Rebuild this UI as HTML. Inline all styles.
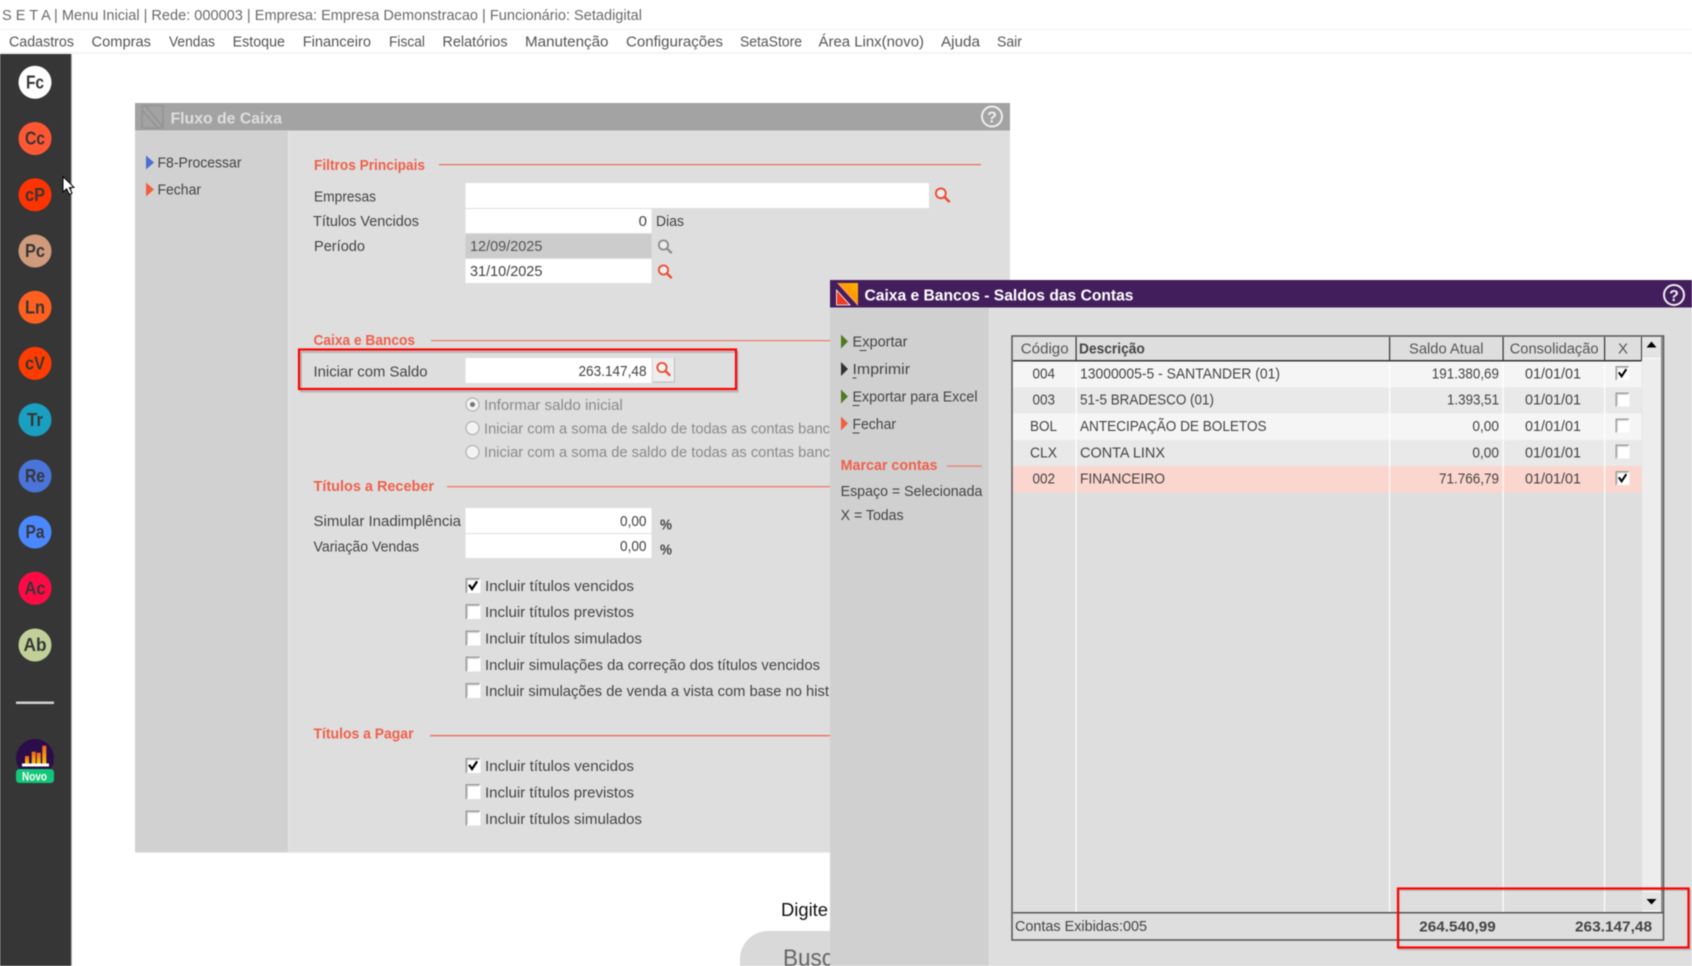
<!DOCTYPE html>
<html lang="pt-BR">
<head>
<meta charset="utf-8">
<title>Fluxo de Caixa</title>
<style>
html,body{margin:0;padding:0;background:#fff;width:1692px;height:966px;overflow:hidden}
svg{display:block;filter:blur(.45px)}
text{font-family:"Liberation Sans",sans-serif;font-size:15px;fill:#444}
.t{fill:#6a6a6a}
.m{fill:#555}
.r{fill:#f0604a;font-weight:bold;font-size:15px}
.g{fill:#8a8a8a}
.b{font-weight:bold}
.s{font-weight:bold;font-size:18px;fill:#363636}
</style>
</head>
<body>
<svg xmlns="http://www.w3.org/2000/svg" width="1692" height="966" viewBox="0 0 1692 966">
<defs>
<symbol id="srch" viewBox="0 0 18 18" overflow="visible">
<circle cx="6.7" cy="6.7" r="5.2" fill="#fff" fill-opacity=".45" stroke="currentColor" stroke-width="2"/>
<path d="M10.6 10.6 L16 16" stroke="currentColor" stroke-width="2.6" fill="none"/>
</symbol>
<symbol id="cb" viewBox="0 0 15 15">
<rect width="15" height="15" fill="#fff"/>
<path d="M.7 15V.7H14.3" fill="none" stroke="#888" stroke-width="1.2"/>
<path d="M2 13.6V2H13.4" fill="none" stroke="#d0d0d0" stroke-width="1"/>
</symbol>
<symbol id="ck" viewBox="0 0 15 15">
<rect width="15" height="15" fill="#fff"/>
<path d="M.7 15V.7H14.3" fill="none" stroke="#888" stroke-width="1.2"/>
<path d="M2 13.6V2H13.4" fill="none" stroke="#d0d0d0" stroke-width="1"/>
<path d="M3.6 6.8 L6.5 11 L11.6 3.4" fill="none" stroke="#000" stroke-width="2.2"/>
</symbol>
<linearGradient id="lg" x1="0" y1="1" x2="1" y2="0"><stop offset="0" stop-color="#ff7a00"/><stop offset="1" stop-color="#ffb400"/></linearGradient>
<linearGradient id="bar" x1="0" y1="0" x2="0" y2="1"><stop offset="0" stop-color="#f2641e"/><stop offset="1" stop-color="#ffc000"/></linearGradient>
</defs>

<rect width="1692" height="966" fill="#fff"/>

<!-- title + menu -->
<text class="t" x="2" y="20" textLength="640" lengthAdjust="spacingAndGlyphs">S E T A | Menu Inicial | Rede: 000003 | Empresa: Empresa Demonstracao | Funcionário: Setadigital</text>
<rect x="0" y="29" width="1692" height="1" fill="#f4f4f4"/>
<g class="menu">
<text class="m" x="9" y="46.5" textLength="65" lengthAdjust="spacingAndGlyphs">Cadastros</text>
<text class="m" x="91.5" y="46.5" textLength="59.5" lengthAdjust="spacingAndGlyphs">Compras</text>
<text class="m" x="169" y="46.5" textLength="46" lengthAdjust="spacingAndGlyphs">Vendas</text>
<text class="m" x="232.6" y="46.5" textLength="52.4" lengthAdjust="spacingAndGlyphs">Estoque</text>
<text class="m" x="302.7" y="46.5" textLength="68.3" lengthAdjust="spacingAndGlyphs">Financeiro</text>
<text class="m" x="389" y="46.5" textLength="36" lengthAdjust="spacingAndGlyphs">Fiscal</text>
<text class="m" x="442.4" y="46.5" textLength="65.2" lengthAdjust="spacingAndGlyphs">Relatórios</text>
<text class="m" x="525" y="46.5" textLength="83.5" lengthAdjust="spacingAndGlyphs">Manutenção</text>
<text class="m" x="626" y="46.5" textLength="97" lengthAdjust="spacingAndGlyphs">Configurações</text>
<text class="m" x="740" y="46.5" textLength="62" lengthAdjust="spacingAndGlyphs">SetaStore</text>
<text class="m" x="818.500" y="46.5" textLength="105.500" lengthAdjust="spacingAndGlyphs">Área Linx(novo)</text>
<text class="m" x="941" y="46.5" textLength="39" lengthAdjust="spacingAndGlyphs">Ajuda</text>
<text class="m" x="997" y="46.5" textLength="25" lengthAdjust="spacingAndGlyphs">Sair</text>
</g>
<rect x="0" y="52" width="1692" height="2" fill="#f3f3f3"/>

<!-- background search content -->
<text x="781" y="916" style="font-size:18px;fill:#111" textLength="47" lengthAdjust="spacingAndGlyphs">Digite</text>
<rect x="740" y="931" width="200" height="60" rx="28" fill="#d9d9d9"/>
<text x="783" y="966" style="font-size:24px;fill:#666" textLength="50" lengthAdjust="spacingAndGlyphs">Busc</text>

<!-- sidebar -->
<rect x="0" y="54" width="71" height="912" fill="#363636"/>
<rect x="71" y="54" width="1" height="912" fill="#b5b5b5"/>
<g text-anchor="middle">
<circle cx="35" cy="82.3" r="16.5" fill="#fff"/><text class="s" x="35" y="88.5" textLength="18" lengthAdjust="spacingAndGlyphs">Fc</text>
<circle cx="35" cy="138.5" r="16.5" fill="#ff5733"/><text class="s" x="35" y="144.7" textLength="20" lengthAdjust="spacingAndGlyphs">Cc</text>
<circle cx="35" cy="194.8" r="16.5" fill="#ff3300"/><text class="s" x="35" y="201" textLength="20" lengthAdjust="spacingAndGlyphs">cP</text>
<circle cx="35" cy="251" r="16.5" fill="#d09a7c"/><text class="s" x="35" y="257.2" textLength="20" lengthAdjust="spacingAndGlyphs">Pc</text>
<circle cx="35" cy="307.3" r="16.5" fill="#ff5f1f"/><text class="s" x="35" y="313.5" textLength="20" lengthAdjust="spacingAndGlyphs">Ln</text>
<circle cx="35" cy="363.4" r="16.5" fill="#ff3c00"/><text class="s" x="35" y="369.6" textLength="20" lengthAdjust="spacingAndGlyphs">cV</text>
<circle cx="35" cy="419.7" r="16.5" fill="#19a0c0"/><text class="s" x="35" y="425.9" textLength="16" lengthAdjust="spacingAndGlyphs">Tr</text>
<circle cx="35" cy="476" r="16.5" fill="#4a74d9"/><text class="s" x="35" y="482.2" textLength="20" lengthAdjust="spacingAndGlyphs">Re</text>
<circle cx="35" cy="532" r="16.5" fill="#4a88ff"/><text class="s" x="35" y="538.2" textLength="19" lengthAdjust="spacingAndGlyphs">Pa</text>
<circle cx="35" cy="588.3" r="16.5" fill="#ff0a45"/><text class="s" x="35" y="594.5" textLength="21" lengthAdjust="spacingAndGlyphs">Ac</text>
<circle cx="35" cy="645" r="16.5" fill="#c0d098"/><text class="s" x="35" y="651.2" textLength="23" lengthAdjust="spacingAndGlyphs">Ab</text>
</g>
<rect x="16" y="701.5" width="38" height="2.5" fill="#d0d0d0"/>
<circle cx="35" cy="758" r="19" fill="#2b0d4a"/>
<rect x="25" y="756" width="4" height="7.5" fill="url(#bar)"/>
<rect x="31.7" y="751.7" width="4" height="11.8" fill="url(#bar)"/>
<rect x="36.7" y="752.7" width="4" height="10.8" fill="url(#bar)"/>
<rect x="42.3" y="745.7" width="4" height="17.8" fill="url(#bar)"/>
<rect x="22" y="763.5" width="27" height="3" fill="#fff"/>
<rect x="16" y="769" width="38" height="14" rx="3.5" fill="#12c77a"/>
<text x="22" y="780.5" style="font-size:12px;font-weight:bold;fill:#fff" textLength="25" lengthAdjust="spacingAndGlyphs">Novo</text>
<path d="M63 176.7 V192 L66.6 188.8 L69.4 194.5 L72 193.2 L69.4 187.7 L74 187.3 Z" fill="#fff" stroke="#000" stroke-width="1"/>

<!-- Fluxo de Caixa window -->
<rect x="135" y="103" width="875" height="749.500" fill="#dedede"/>
<rect x="135" y="131" width="153" height="721.500" fill="#d1d1d1"/>
<rect x="288" y="131" width="1" height="721.500" fill="#e6e6e6"/>
<rect x="135" y="103" width="875" height="27.500" fill="#a3a3a3"/>
<rect x="135" y="852" width="695" height="1" fill="#ececec"/>
<g fill="none" stroke="#939393" stroke-width="1.500"><path d="M142 105.500 H163 V128 H142 Z"/><path d="M145 105.500 L163 127"/><path d="M142 110 L158 128"/></g>
<text x="170.500" y="123.500" style="font-size:16px;font-weight:bold;fill:#dedede" textLength="111.500" lengthAdjust="spacingAndGlyphs">Fluxo de Caixa</text>
<circle cx="992" cy="116.500" r="10" fill="none" stroke="#eee" stroke-width="2"/>
<text x="992" y="122.500" text-anchor="middle" style="font-size:16px;font-weight:bold;fill:#eee">?</text>

<path d="M146 155.500 L154 162.500 L146 169.500 Z" fill="#4a6fd0"/>
<path d="M146 182.500 L154 189.500 L146 196.500 Z" fill="#f0603c"/>
<text x="157.500" y="167.500" textLength="84" lengthAdjust="spacingAndGlyphs">F8-Processar</text>
<text x="157.500" y="194.500" textLength="43.500" lengthAdjust="spacingAndGlyphs">Fechar</text>

<text class="r" x="314" y="170" textLength="111" lengthAdjust="spacingAndGlyphs">Filtros Principais</text>
<rect x="439" y="164" width="542" height="1.200" fill="#ee6a52"/>
<rect x="465.500" y="183" width="463.500" height="25" fill="#fff"/>
<use href="#srch" x="934.500" y="187" width="17" height="17" color="#ee4a30"/>
<text x="314" y="201.500" textLength="62" lengthAdjust="spacingAndGlyphs">Empresas</text>
<text x="313" y="226" textLength="106" lengthAdjust="spacingAndGlyphs">Títulos Vencidos</text>
<rect x="465.500" y="209" width="186" height="24" fill="#fff"/>
<text x="647" y="226" text-anchor="end">0</text>
<text x="656" y="226" textLength="28" lengthAdjust="spacingAndGlyphs">Dias</text>
<text x="314" y="251" textLength="51" lengthAdjust="spacingAndGlyphs">Período</text>
<rect x="465.500" y="234" width="186" height="24" fill="#cccccc"/>
<text class="m" x="470" y="251" textLength="72.400" lengthAdjust="spacingAndGlyphs">12/09/2025</text>
<use href="#srch" x="657.500" y="239" width="16" height="16" color="#8b8b8b"/>
<rect x="465.500" y="259" width="186" height="24" fill="#fff"/>
<text x="470" y="276" textLength="72.400" lengthAdjust="spacingAndGlyphs">31/10/2025</text>
<use href="#srch" x="657.500" y="264" width="16" height="16" color="#ee4a30"/>

<text class="r" x="313.500" y="345" textLength="101.500" lengthAdjust="spacingAndGlyphs">Caixa e Bancos</text>
<rect x="431" y="340" width="400" height="1.200" fill="#ee7a66"/>
<rect x="299.500" y="350.500" width="436.500" height="39.500" fill="none" stroke="#000" stroke-opacity=".18" stroke-width="2" transform="translate(1.500,1.500)"/>
<rect x="299" y="349.500" width="437" height="39.500" fill="none" stroke="#f00" stroke-width="2.200"/>
<text x="313.500" y="376.500" textLength="114" lengthAdjust="spacingAndGlyphs">Iniciar com Saldo</text>
<rect x="465.500" y="358" width="186" height="25" fill="#fff"/>
<text x="578.500" y="376" textLength="68" lengthAdjust="spacingAndGlyphs">263.147,48</text>
<rect x="653" y="358" width="22" height="24" fill="#ededed"/>
<path d="M674.500 358 V382 H653" fill="none" stroke="#bbb"/>
<use href="#srch" x="656" y="361" width="16" height="17" color="#ee4a30"/>

<g>
<circle cx="472.500" cy="404.500" r="6.500" fill="#f3f3f3" stroke="#aaa"/><circle cx="472.500" cy="404.500" r="2.500" fill="#777"/>
<circle cx="472.500" cy="428" r="6.500" fill="#f3f3f3" stroke="#aaa"/>
<circle cx="472.500" cy="452" r="6.500" fill="#f3f3f3" stroke="#aaa"/>
</g>
<text class="g" x="484" y="410" textLength="138.800" lengthAdjust="spacingAndGlyphs">Informar saldo inicial</text>
<text class="g" x="484" y="433.500" textLength="346" lengthAdjust="spacingAndGlyphs">Iniciar com a soma de saldo de todas as contas banc</text>
<text class="g" x="484" y="457" textLength="346" lengthAdjust="spacingAndGlyphs">Iniciar com a soma de saldo de todas as contas banc</text>

<text class="r" x="313.500" y="491" textLength="120.500" lengthAdjust="spacingAndGlyphs">Títulos a Receber</text>
<rect x="447" y="486" width="384" height="1.300" fill="#ee7a66"/>
<text x="313.500" y="526" textLength="147.500" lengthAdjust="spacingAndGlyphs">Simular Inadimplência</text>
<rect x="465.500" y="508" width="186" height="25" fill="#fff"/>
<text x="620" y="526" textLength="26.500" lengthAdjust="spacingAndGlyphs">0,00</text>
<text x="660" y="529.500" style="font-weight:bold;font-size:15px" textLength="12" lengthAdjust="spacingAndGlyphs">%</text>
<text x="313.500" y="551.500" textLength="105.500" lengthAdjust="spacingAndGlyphs">Variação Vendas</text>
<rect x="465.500" y="534" width="186" height="24" fill="#fff"/>
<text x="620" y="551" textLength="26.500" lengthAdjust="spacingAndGlyphs">0,00</text>
<text x="660" y="554.500" style="font-weight:bold;font-size:15px" textLength="12" lengthAdjust="spacingAndGlyphs">%</text>

<use href="#ck" x="465.500" y="578" width="15" height="15"/>
<text x="485" y="591" textLength="149" lengthAdjust="spacingAndGlyphs">Incluir títulos vencidos</text>
<use href="#cb" x="465.500" y="604" width="15" height="15"/>
<text x="485" y="617" textLength="149" lengthAdjust="spacingAndGlyphs">Incluir títulos previstos</text>
<use href="#cb" x="465.500" y="630.500" width="15" height="15"/>
<text x="485" y="643.500" textLength="157" lengthAdjust="spacingAndGlyphs">Incluir títulos simulados</text>
<use href="#cb" x="465.500" y="656.500" width="15" height="15"/>
<text x="485" y="670" textLength="335" lengthAdjust="spacingAndGlyphs">Incluir simulações da correção dos títulos vencidos</text>
<use href="#cb" x="465.500" y="683" width="15" height="15"/>
<text x="485" y="696" textLength="344" lengthAdjust="spacingAndGlyphs">Incluir simulações de venda a vista com base no hist</text>

<text class="r" x="313.500" y="738.500" textLength="100" lengthAdjust="spacingAndGlyphs">Títulos a Pagar</text>
<rect x="430" y="735" width="401" height="1.300" fill="#ee6a52"/>
<use href="#ck" x="465.500" y="758" width="15" height="15"/>
<text x="485" y="771" textLength="149" lengthAdjust="spacingAndGlyphs">Incluir títulos vencidos</text>
<use href="#cb" x="465.500" y="784" width="15" height="15"/>
<text x="485" y="797.500" textLength="149" lengthAdjust="spacingAndGlyphs">Incluir títulos previstos</text>
<use href="#cb" x="465.500" y="810.500" width="15" height="15"/>
<text x="485" y="824" textLength="157" lengthAdjust="spacingAndGlyphs">Incluir títulos simulados</text>

<!-- Caixa e Bancos window -->
<rect x="830" y="280" width="862" height="686" fill="#dedede"/>
<rect x="830" y="308" width="159" height="658" fill="#d0d0d0"/>
<rect x="989" y="308" width="1" height="658" fill="#e6e6e6"/>
<rect x="830" y="280" width="862" height="27.500" fill="#431e5c"/>
<path d="M838 283 H858 V305 Z" fill="url(#lg)"/>
<path d="M837 283 H840 L858 303 V306 Z" fill="#ff9a3c"/>
<path d="M836.500 290 L850 305 H836.500 Z" fill="#f03a22" stroke="#fff" stroke-width=".8"/>
<text x="864.500" y="300.500" style="font-size:16px;font-weight:bold;fill:#fff" textLength="269" lengthAdjust="spacingAndGlyphs">Caixa e Bancos - Saldos das Contas</text>
<circle cx="1674" cy="295" r="10" fill="none" stroke="#eee" stroke-width="2"/>
<text x="1674" y="301" text-anchor="middle" style="font-size:16px;font-weight:bold;fill:#eee">?</text>

<path d="M841 334.500 L848 341.500 L841 348.500 Z" fill="#4f7a1f"/>
<text x="852.500" y="346.500" textLength="55" lengthAdjust="spacingAndGlyphs">Exportar</text>
<rect x="859.500" y="350" width="7" height="1" fill="#444"/>
<path d="M841 362 L848 369 L841 376 Z" fill="#333"/>
<text x="852.500" y="374" textLength="57.500" lengthAdjust="spacingAndGlyphs">Imprimir</text>
<rect x="852.500" y="377.500" width="4" height="1" fill="#444"/>
<path d="M841 389.500 L848 396.500 L841 403.500 Z" fill="#4f7a1f"/>
<text x="852.500" y="401.500" textLength="125" lengthAdjust="spacingAndGlyphs">Exportar para Excel</text>
<rect x="852.500" y="405" width="7" height="1" fill="#444"/>
<path d="M841 416.500 L848 423.500 L841 430.500 Z" fill="#f0603c"/>
<text x="852.500" y="429" textLength="43.500" lengthAdjust="spacingAndGlyphs">Fechar</text>
<rect x="852.500" y="432.500" width="7" height="1" fill="#444"/>
<text class="r" x="840.600" y="470" textLength="96.900" lengthAdjust="spacingAndGlyphs">Marcar contas</text>
<rect x="947" y="465.500" width="35" height="1.200" fill="#ee7a66"/>
<text x="840.600" y="496" textLength="141.800" lengthAdjust="spacingAndGlyphs">Espaço = Selecionada</text>
<text x="840.600" y="520" textLength="63" lengthAdjust="spacingAndGlyphs">X = Todas</text>

<!-- grid -->
<rect x="1012" y="336" width="651.500" height="604" fill="#dedede" stroke="#555" stroke-width="1.500"/>
<rect x="1013" y="361.500" width="628.500" height="26" fill="#f5f5f5"/>
<rect x="1013" y="387.500" width="628.500" height="26" fill="#e9e9e9"/>
<rect x="1013" y="413.500" width="628.500" height="26.500" fill="#f5f5f5"/>
<rect x="1013" y="440" width="628.500" height="26" fill="#e9e9e9"/>
<rect x="1013" y="466" width="628.500" height="26.500" fill="#fbd6cf"/>
<g fill="#fff">
<rect x="1075.500" y="361" width="1.200" height="551"/>
<rect x="1389" y="361" width="1.200" height="551"/>
<rect x="1502.500" y="361" width="1.200" height="551"/>
<rect x="1604" y="361" width="1.200" height="551"/>
</g>
<rect x="1013" y="337" width="628.500" height="23.500" fill="#dedede"/>
<g fill="#333">
<rect x="1013" y="360" width="628.500" height="1.500"/>
<rect x="1075.500" y="337" width="1.200" height="23.500"/>
<rect x="1389" y="337" width="1.200" height="23.500"/>
<rect x="1502.500" y="337" width="1.200" height="23.500"/>
<rect x="1604" y="337" width="1.200" height="23.500"/>
<rect x="1641" y="337" width="1.200" height="23.500"/>
</g>
<rect x="1642" y="337" width="19" height="574" fill="#ededed"/>
<rect x="1642" y="337" width="19" height="21" fill="#e4e4e4"/>
<rect x="1642" y="358" width="19" height="1" fill="#fff"/>
<path d="M1646.500 347.500 L1651.500 341.500 L1656.500 347.500 Z" fill="#000"/>
<rect x="1642" y="891.500" width="19" height="19.500" fill="#e4e4e4"/>
<path d="M1642 891.500 H1661 V911 H1642" fill="none" stroke="#fff"/>
<path d="M1646.500 899 L1651.500 904.500 L1656.500 899 Z" fill="#000"/>
<rect x="1661" y="337" width="1.500" height="575" fill="#888"/>
<rect x="1013" y="912" width="650" height="1.500" fill="#555"/>

<text class="m" x="1020.800" y="353.500" textLength="47.800" lengthAdjust="spacingAndGlyphs">Código</text>
<text x="1079" y="353.500" class="b" textLength="65.800" lengthAdjust="spacingAndGlyphs">Descrição</text>
<text class="m" x="1409" y="353.500" textLength="74.500" lengthAdjust="spacingAndGlyphs">Saldo Atual</text>
<text class="m" x="1509.700" y="353.500" textLength="88.900" lengthAdjust="spacingAndGlyphs">Consolidação</text>
<text class="m" x="1618" y="353.500" textLength="10" lengthAdjust="spacingAndGlyphs">X</text>

<text x="1032.500" y="378.500" textLength="22.500" lengthAdjust="spacingAndGlyphs">004</text>
<text x="1080" y="378.500" textLength="200" lengthAdjust="spacingAndGlyphs">13000005-5 - SANTANDER (01)</text>
<text x="1431.800" y="378.500" textLength="67.200" lengthAdjust="spacingAndGlyphs">191.380,69</text>
<text x="1525" y="378.500" textLength="56" lengthAdjust="spacingAndGlyphs">01/01/01</text>
<use href="#ck" x="1615.500" y="366" width="14" height="14"/>

<text x="1032.500" y="404.500" textLength="22.500" lengthAdjust="spacingAndGlyphs">003</text>
<text x="1080" y="404.500" textLength="134" lengthAdjust="spacingAndGlyphs">51-5 BRADESCO (01)</text>
<text x="1447" y="404.500" textLength="52" lengthAdjust="spacingAndGlyphs">1.393,51</text>
<text x="1525" y="404.500" textLength="56" lengthAdjust="spacingAndGlyphs">01/01/01</text>
<use href="#cb" x="1615.500" y="392.500" width="14" height="14"/>

<text x="1030" y="431" textLength="27" lengthAdjust="spacingAndGlyphs">BOL</text>
<text x="1080" y="431" textLength="186.600" lengthAdjust="spacingAndGlyphs">ANTECIPAÇÃO DE BOLETOS</text>
<text x="1472.400" y="431" textLength="26.600" lengthAdjust="spacingAndGlyphs">0,00</text>
<text x="1525" y="431" textLength="56" lengthAdjust="spacingAndGlyphs">01/01/01</text>
<use href="#cb" x="1615.500" y="418.500" width="14" height="14"/>

<text x="1030" y="457.500" textLength="27" lengthAdjust="spacingAndGlyphs">CLX</text>
<text x="1080" y="457.500" textLength="85" lengthAdjust="spacingAndGlyphs">CONTA LINX</text>
<text x="1472.400" y="457.500" textLength="26.600" lengthAdjust="spacingAndGlyphs">0,00</text>
<text x="1525" y="457.500" textLength="56" lengthAdjust="spacingAndGlyphs">01/01/01</text>
<use href="#cb" x="1615.500" y="444.500" width="14" height="14"/>

<text x="1032.500" y="483.500" textLength="22.500" lengthAdjust="spacingAndGlyphs">002</text>
<text x="1080" y="483.500" textLength="85" lengthAdjust="spacingAndGlyphs">FINANCEIRO</text>
<text x="1439" y="483.500" textLength="60" lengthAdjust="spacingAndGlyphs">71.766,79</text>
<text x="1525" y="483.500" textLength="56" lengthAdjust="spacingAndGlyphs">01/01/01</text>
<use href="#ck" x="1615.500" y="471" width="14" height="14"/>

<text x="1015" y="931" textLength="132" lengthAdjust="spacingAndGlyphs">Contas Exibidas:005</text>
<text class="b" x="1419.300" y="931.500" textLength="76.400" lengthAdjust="spacingAndGlyphs">264.540,99</text>
<text class="b" x="1575" y="931.500" textLength="77" lengthAdjust="spacingAndGlyphs">263.147,48</text>

<rect x="1399" y="890" width="291" height="59.500" fill="none" stroke="#000" stroke-opacity=".15" stroke-width="2"/>
<rect x="1398" y="888.500" width="290.500" height="59" fill="none" stroke="#f00" stroke-width="2.200"/>
</svg>
</body>
</html>
